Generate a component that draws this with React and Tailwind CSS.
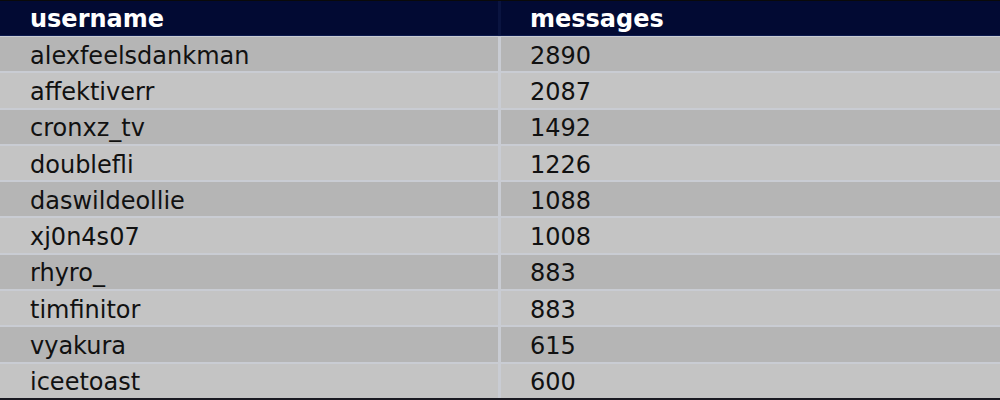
import React from "react";

const rows = [
  ["alexfeelsdankman", "2890"],
  ["affektiverr", "2087"],
  ["cronxz_tv", "1492"],
  ["doublefli", "1226"],
  ["daswildeollie", "1088"],
  ["xj0n4s07", "1008"],
  ["rhyro_", "883"],
  ["timfinitor", "883"],
  ["vyakura", "615"],
  ["iceetoast", "600"],
];

export default function App() {
  return (
    <div
      className="w-[1000px] h-[400px] flex flex-col bg-[#c9ccd3] border-t border-t-[#0a0a0a] border-b-2 border-b-[#1a1a22] overflow-hidden"
      style={{ fontFamily: '"DejaVu Sans", sans-serif' }}
    >
      <div className="h-[35px] shrink-0 flex bg-[#020a33] border-b border-b-[#0d1a4d] text-white font-bold text-[24px] leading-none">
        <div className="w-[498px] flex items-center pl-[30px] pt-[1px]">username</div>
        <div className="w-[3px] bg-[#0a1440]"></div>
        <div className="flex-1 flex items-center pl-[29px] pt-[1px]">messages</div>
      </div>
      <div className="flex-1 flex flex-col gap-[2px] pt-[1px]">
        {rows.map(([u, m], i) => (
          <div key={u} className="flex-1 flex text-[24px] leading-none text-[#111]">
            <div
              className={
                "w-[498px] flex items-center pl-[30px] pt-[3px] " +
                (i % 2 === 0 ? "bg-[#b5b5b5]" : "bg-[#c4c4c4]")
              }
            >
              {u}
            </div>
            <div className="w-[3px]"></div>
            <div
              className={
                "flex-1 flex items-center pl-[29px] pt-[3px] " +
                (i % 2 === 0 ? "bg-[#b5b5b5]" : "bg-[#c4c4c4]")
              }
            >
              {m}
            </div>
          </div>
        ))}
      </div>
    </div>
  );
}
